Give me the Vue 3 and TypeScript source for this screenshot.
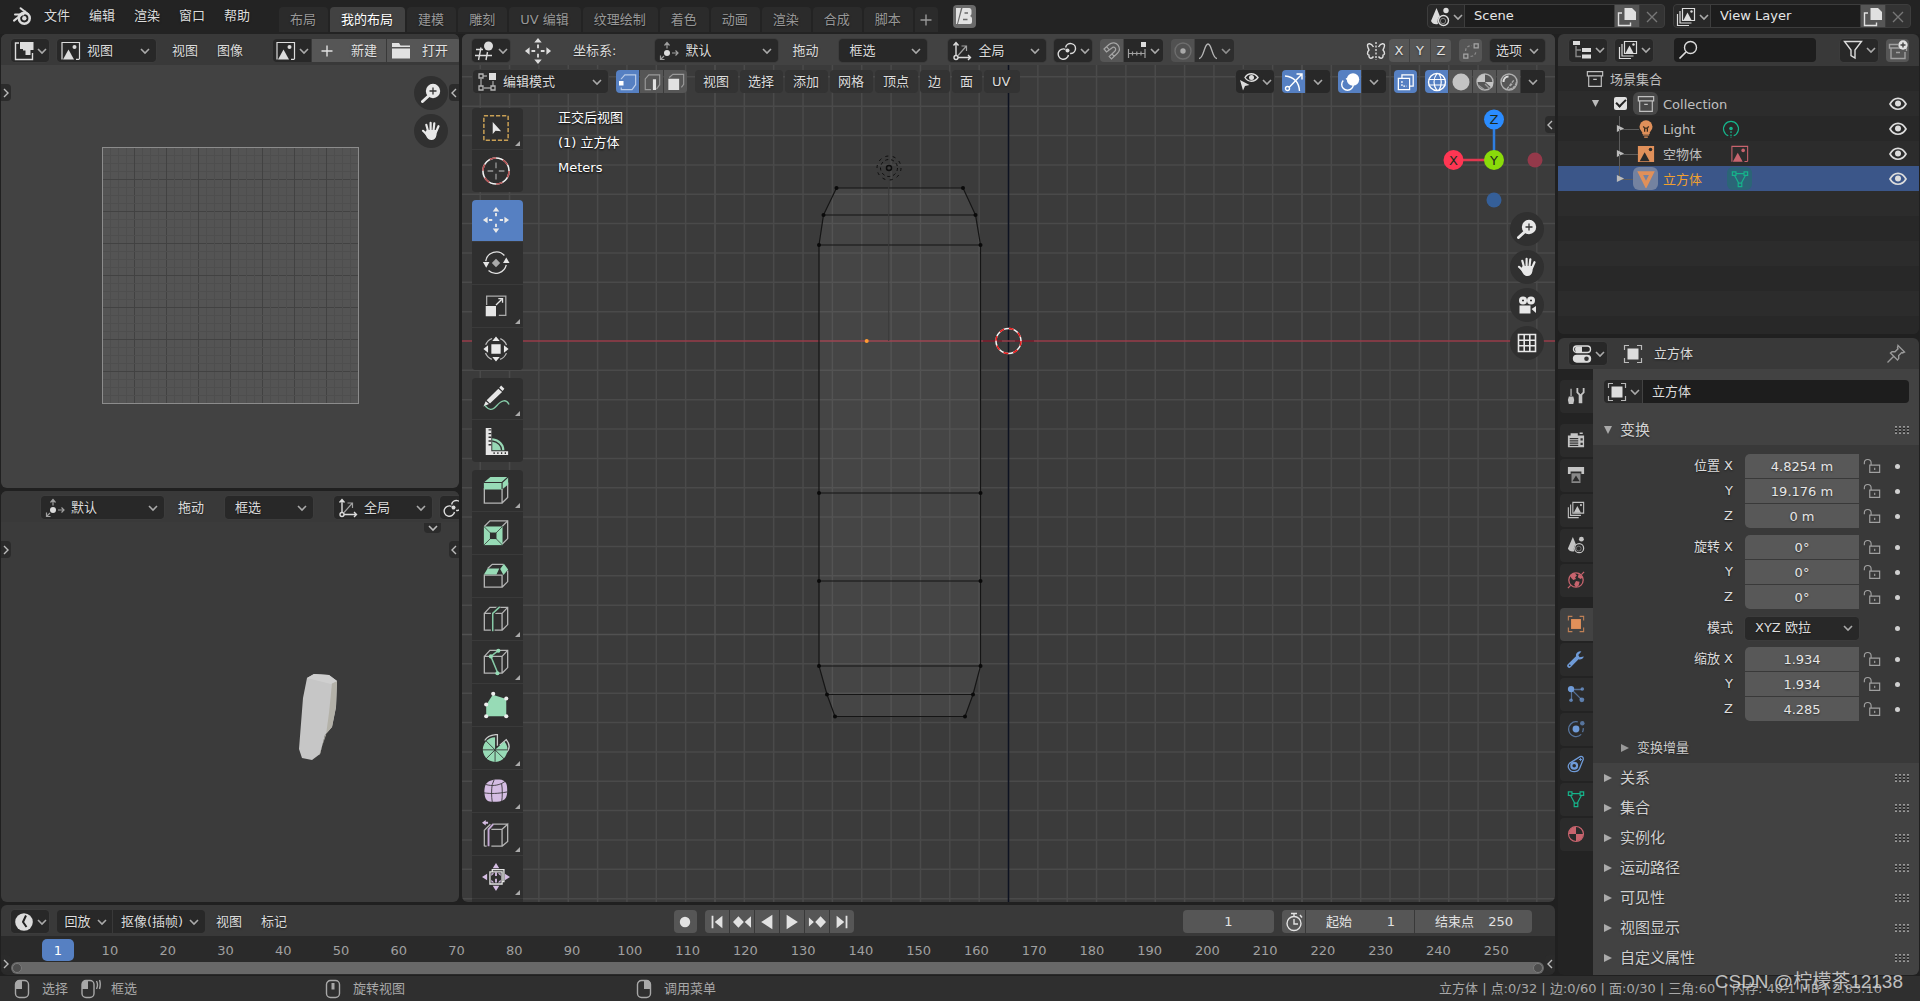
<script setup lang="ts">
import { h, ref } from 'vue'
import type { FunctionalComponent } from 'vue'

const Icon: FunctionalComponent<{ n: string; s?: number }> = (props) =>
  h('svg', { class: 'ic', width: props.s ?? 20, height: props.s ?? 20, 'aria-hidden': 'true' }, [
    h('use', { href: '#' + props.n, width: '100%', height: '100%' }),
  ])
Icon.props = ['n', 's']

const menus = ['文件', '编辑', '渲染', '窗口', '帮助']
const tabs = ['布局', '我的布局', '建模', '雕刻', 'UV 编辑', '纹理绘制', '着色', '动画', '渲染', '合成', '脚本']
const viewMenus = ['视图', '选择', '添加', '网格', '顶点', '边', '面', 'UV']

interface Tool { icon: string; label: string; more?: boolean; on?: boolean }
const toolGroups: Tool[][] = [
  [{ icon: 't-select', label: '框选', more: true }, { icon: 't-cursor', label: '游标' }],
  [
    { icon: 't-move', label: '移动', on: true },
    { icon: 't-rotate', label: '旋转' },
    { icon: 't-scale', label: '缩放', more: true },
    { icon: 't-transform', label: '变换' },
  ],
  [{ icon: 't-annotate', label: '标注', more: true }, { icon: 't-measure', label: '测量' }],
  [
    { icon: 't-extrude', label: '挤出选区', more: true },
    { icon: 't-inset', label: '内插面' },
    { icon: 't-bevel', label: '倒角' },
    { icon: 't-loop', label: '环切', more: true },
    { icon: 't-knife', label: '切割', more: true },
    { icon: 't-poly', label: '多边形建形' },
    { icon: 't-spin', label: '旋绕', more: true },
    { icon: 't-smooth', label: '光滑', more: true },
    { icon: 't-slide', label: '滑移边线', more: true },
    { icon: 't-shrink', label: '法向缩放', more: true },
    { icon: 't-shear', label: '切变' },
  ],
]

const shading = [
  { icon: 'wire', label: '线框', on: true },
  { icon: 'solid', label: '实体' },
  { icon: 'matball', label: '材质预览' },
  { icon: 'rendball', label: '渲染' },
]

const transport = [
  { icon: 'first', label: '跳至起点' },
  { icon: 'prevkey', label: '上一关键帧' },
  { icon: 'back', label: '倒放' },
  { icon: 'play', label: '播放' },
  { icon: 'nextkey', label: '下一关键帧' },
  { icon: 'last', label: '跳至终点' },
]
const frames = Array.from({ length: 25 }, (_, i) => (i + 1) * 10)

const propTabs = [
  [{ icon: 'tools', c: 'c-grey', label: '工具' }],
  [
    { icon: 'render', c: 'c-grey', label: '渲染' },
    { icon: 'output', c: 'c-grey', label: '输出' },
    { icon: 'layers', c: 'c-grey', label: '视图层' },
    { icon: 'scene', c: 'c-grey', label: '场景' },
    { icon: 'world', c: 'c-red', label: '世界' },
  ],
  [
    { icon: 'object', c: 'c-orange', label: '物体', on: true },
    { icon: 'wrench', c: 'c-blue', label: '修改器' },
    { icon: 'particles', c: 'c-blue', label: '粒子' },
    { icon: 'physics', c: 'c-blue', label: '物理' },
    { icon: 'constraint', c: 'c-blue', label: '约束' },
    { icon: 'mesh', c: 'c-green', label: '数据' },
    { icon: 'material', c: 'c-red', label: '材质' },
  ],
]
const loc = ref([['位置 X', '4.8254 m'], ['Y', '19.176 m'], ['Z', '0 m']])
const rot = ref([['旋转 X', '0°'], ['Y', '0°'], ['Z', '0°']])
const scl = ref([['缩放 X', '1.934'], ['Y', '1.934'], ['Z', '4.285']])
const panels = ['关系', '集合', '实例化', '运动路径', '可见性', '视图显示', '自定义属性']

// One unit of the floor grid covers 29.35 px; every tenth line is brighter.
const step = 29.35
const originX = 546.5
const originY = 307
const lines = (origin: number, size: number) => {
  const out: { p: number; major: boolean }[] = []
  for (let i = -25; i <= 25; i++) {
    const p = origin + i * step
    if (i !== 0 && p > 0 && p < size) out.push({ p, major: i % 10 === 0 })
  }
  return out
}
const vLines = lines(originX, 1093)
const hLines = lines(originY, 868)
const verts: number[][] = [
  [374.5, 154], [501, 154], [361.5, 181], [513.5, 181], [357, 211], [518.5, 211],
  [357, 459], [518.5, 459], [357, 547], [518.5, 547], [357, 632], [518.5, 632],
  [365, 660.5], [511, 660.5], [373, 682.5], [503, 682.5],
]
const uvLines = Array.from({ length: 31 }, (_, i) => (i + 1) * 8)
</script>

<template>
  <svg width="0" height="0" class="sprite" aria-hidden="true">
    <symbol id="chev" viewBox="0 0 10 10"><path d="M1 3l4 4 4-4" stroke-width="1.6" /></symbol>
    <symbol id="chev-r" viewBox="0 0 10 10"><path d="M3 1l4 4-4 4" /></symbol>
    <symbol id="chev-l" viewBox="0 0 10 10"><path d="M7 1L3 5l4 4" /></symbol>
    <symbol id="tri-r" viewBox="0 0 10 10"><path d="M1 1v8l8-4z" fill="currentColor" stroke="none" /></symbol>
    <symbol id="tri-d" viewBox="0 0 10 10"><path d="M1 1h8l-4 8z" fill="currentColor" stroke="none" /></symbol>
    <symbol id="logo" viewBox="0 0 20 20">
      <circle cx="12.3" cy="12.3" r="5.4" stroke-width="2.6" /><circle cx="12.3" cy="12.2" r="2.2" fill="currentColor" stroke="none" />
      <path d="M2 14.6L13.4 5.6M3 8.4h8.4M8.6 2.2l7.6 6" stroke-width="2" stroke-linecap="round" />
    </symbol>
    <symbol id="uv" viewBox="0 0 20 20"><path d="M5 2H1.500v16.500h17V12" /><path d="M6 1h13.500v8h-3v5h-5V9.500H9V8H6z" fill="currentColor" stroke="none" /></symbol>
    <symbol id="image" viewBox="0 0 20 20"><path d="M1 18V1.500h17.500V18M1 12v6.500M15 18.300h3.500" stroke-width="1.2" /><path d="M2 18.500L7.500 8.500l5.500 10z" fill="currentColor" stroke="none" /><circle cx="13.500" cy="6" r="2" fill="currentColor" stroke="none" /></symbol>
    <symbol id="folder" viewBox="0 0 20 20"><path d="M1 2h7l1.500 2.500H19V6H1zM1 7.500h18v10H1z" fill="currentColor" stroke="none" /></symbol>
    <symbol id="plus" viewBox="0 0 20 20"><path d="M10 4.500v11M4.500 10h11" /></symbol>
    <symbol id="zoom" viewBox="0 0 20 20"><circle cx="12" cy="8" r="7.200" fill="currentColor" stroke="none" /><path d="M7.500 13l-6 5.500" stroke-width="3" stroke-linecap="round" /><path d="M12 4.500v7M8.500 8h7" stroke="#333" stroke-width="1.300" /></symbol>
    <symbol id="hand" viewBox="0 0 20 20"><path d="M7 10L5.300 3.800M9.600 9V1.800M12.500 9.500l.8-7.200M15 11l2.500-5.800M6.500 14L2 9.800" stroke-width="2.200" stroke-linecap="round" /><path d="M5.800 9h10.300l-.6 5c-.5 3.500-2.500 5-5 5-2.600 0-4-1.200-5.500-4.200L3.500 12z" fill="currentColor" stroke="none" /></symbol>
    <symbol id="cameranav" viewBox="0 0 20 20"><circle cx="6" cy="5.500" r="4" fill="currentColor" stroke="none" /><circle cx="14" cy="5.500" r="4" fill="currentColor" stroke="none" /><path d="M2.500 10.500h11v8h-11zM14.500 14l4.500-3v7z" fill="currentColor" stroke="none" /><path d="M5 5.500h2M13 5.500h2" stroke="#333" /></symbol>
    <symbol id="gridnav" viewBox="0 0 20 20"><path d="M1.500 1.500h17v17h-17zM7.200 1.500v17M12.800 1.500v17M1.500 7.200h17M1.500 12.800h17" stroke-width="1.600" /></symbol>
    <symbol id="view3d" viewBox="0 0 20 20"><circle cx="13.500" cy="5" r="4.500" fill="currentColor" stroke="none" /><path d="M1 8.500h7M0 14.500h17M6 6.500L3.500 19M12.500 11l-1.500 8" /></symbol>
    <symbol id="move" viewBox="0 0 30 30"><path d="M15 1l4 5h-8zM15 29l4-5h-8zM1 15l5-4v8zM29 15l-5-4v8zM14 8h2v4h-2zM14 18h2v4h-2zM8 14h4v2H8zM18 14h4v2h-4z" fill="currentColor" stroke="none" /></symbol>
    <symbol id="orient" viewBox="0 0 20 20"><circle cx="8" cy="12" r="3" fill="currentColor" stroke="none" /><path d="M8 7.500V2M5.500 4.500L8 1.500l2.500 3M13 12h5.500M16.500 9.500l2.500 2.500-2.500 2.500M5 15l-3.500 3.500M1.500 14.500v4h4" stroke="#a0a0a0" stroke-width="1.200" /></symbol>
    <symbol id="axes" viewBox="0 0 20 20"><path d="M4 14V2M1.500 4.500L4 1.500l2.500 3M6 16.500h12.500M16 14l2.500 2.500L16 19" /><circle cx="4" cy="16.500" r="2" /><path d="M6 14.500L14 5.500M9.500 5h5v5" stroke="#a0a0a0" stroke-width="1.200" /></symbol>
    <symbol id="pivot" viewBox="0 0 20 20"><path d="M8.500 8.300A5.200 5.200 0 1 0 11.500 14M8.600 6.500a5 5 0 1 1 4.500 6" /><circle cx="10.500" cy="9.500" r="2" fill="currentColor" stroke="none" /></symbol>
    <symbol id="magnet" viewBox="0 0 20 20"><path d="M2 8l5-4.500c3-2.600 7.200-2 9.200.8 2 3 1.300 6-1 8.200L9.500 18l-2.300-2.500 5.300-5c1.400-1.300 1.500-2.700.6-3.600-1-1-2.400-.8-3.600.3L4.500 11zM4.500 5.700l2.600 3M12.300 15.500l-2.400-2.700" stroke-width="1.200" /></symbol>
    <symbol id="incr" viewBox="0 0 20 20"><path d="M1.500 8v9M18 8v9M1.500 12.500H18M5.500 10.500v4M9.800 10.500v4M14 10.500v4" stroke="#a0a0a0" stroke-width="1.200" /><path d="M14 1h5v5h-5z" fill="currentColor" stroke="none" /></symbol>
    <symbol id="prop" viewBox="0 0 20 20"><circle cx="10" cy="10" r="8" stroke="#7c7c7c" /><circle cx="10" cy="10" r="2.700" fill="#ccc" stroke="none" /></symbol>
    <symbol id="falloff" viewBox="0 0 20 20"><path d="M1 17.500c5 0 5-14.500 9-14.500s4 14.500 9 14.500" /></symbol>
    <symbol id="mirror" viewBox="0 0 20 20"><path d="M10 1v18" stroke-dasharray="2 1.500" /><path d="M7.500 6C5 2 1.500 2 1.500 4.500c0 2 1 3 1.500 4.500-1 1-1.500 2-1.500 3.500 0 1 .8 1.500 1.500 1.700-.5 3 2.500 4.300 4.500 1.300M12.500 6c2.500-4 6-4 6-1.500 0 2-1 3-1.500 4.500 1 1 1.500 2 1.500 3.500 0 1-.8 1.500-1.500 1.700.5 3-2.500 4.300-4.500 1.300" /></symbol>
    <symbol id="automerge" viewBox="0 0 20 20"><path d="M2 13.500h4.500V18H2zM13.500 2H18v4.500h-4.500z" /><path d="M4 10c0-4 3-6 7-6M9.500 16c4 0 6-3 6-6.500" stroke-dasharray="3 2" stroke="#888" /></symbol>
    <symbol id="edit" viewBox="0 0 20 20"><path d="M4 7v7M7 16h7M16 9v5M6 4h4" stroke="#999" /><path d="M2 2h4v4H2zM2 14h4v4H2zM14 14h4v4h-4z" stroke-width="1.300" stroke="#b5b5b5" /><path d="M12 1h7v7h-7z" fill="currentColor" stroke="none" /></symbol>
    <symbol id="vsel" viewBox="0 0 20 20"><path d="M2.500 7V6.500L6.500 2h12v11l-4 5.500h-12V16" stroke="#b9cbe8" stroke-width="1.300" /><path d="M0 9h5v5H0z" fill="currentColor" stroke="none" /></symbol>
    <symbol id="esel" viewBox="0 0 20 20"><path d="M9 18.500H2.500v-12L6.500 2h12v11l-3.500 5" stroke="#999" stroke-width="1.300" /><path d="M11 7h3.500v12H11z" fill="currentColor" stroke="none" /></symbol>
    <symbol id="fsel" viewBox="0 0 20 20"><path d="M2.500 5L6.500 1.500h12v11L16 16" stroke="#999" stroke-width="1.300" /><path d="M1.500 6.500h12V19h-12z" fill="currentColor" stroke="none" /></symbol>
    <symbol id="viscur" viewBox="0 0 20 20"><path d="M6 5.500c3-5 9.500-5 13 0-3.500 5-10 5-13 0z" /><circle cx="12.500" cy="5.500" r="2.500" fill="currentColor" stroke="none" /><path d="M1 8l9.500 5-4.500 1-2 4.500z" fill="currentColor" stroke="none" /></symbol>
    <symbol id="gizmo" viewBox="0 0 20 20"><path d="M1 4c9 1 14 6 14.500 15M5 15.500L17.500 2.500M12.500 2H18v5.500" /><circle cx="3.500" cy="16.500" r="2" /></symbol>
    <symbol id="overlay" viewBox="0 0 20 20"><circle cx="13" cy="7.500" r="6.200" fill="currentColor" stroke="none" /><circle cx="7.500" cy="12.500" r="5.800" stroke-dasharray="22 3" /></symbol>
    <symbol id="xray" viewBox="0 0 20 20"><path d="M1.500 6h12.500v12.500H1.500zM5.500 6V2h12.500v12.500h-4" /><path d="M5.500 9v5.500H11" stroke-dasharray="2 1.500" /></symbol>
    <symbol id="wire" viewBox="0 0 20 20"><circle cx="10" cy="10" r="8.500" /><path d="M1.500 7.500h17M1.500 13h17M10 1.500c-4 5-4 12 0 17M12 1.500c3 5 3 12 0 17" stroke-width="1.200" /></symbol>
    <symbol id="solid" viewBox="0 0 20 20"><circle cx="10" cy="10" r="8.500" fill="#c4c4c4" stroke="none" /></symbol>
    <symbol id="matball" viewBox="0 0 20 20"><circle cx="10" cy="10" r="8" stroke="#b0b0b0" /><path d="M10 2a8 8 0 0 0-8 8h8zM10 10l7 6a9 9 0 0 0 1-6z" fill="#c4c4c4" stroke="none" /><path d="M3 13l7 5M10 12l5 5" stroke="#999" /></symbol>
    <symbol id="rendball" viewBox="0 0 20 20"><circle cx="10" cy="10" r="8" stroke="#b0b0b0" /><path d="M4.500 10c0-3 2-5.500 5-5.500" stroke="#ddd" stroke-width="2" /><path d="M10 17.500c4-1 6.500-3.500 7.500-7.500M11 14l3-3M8 17l7-9" stroke="#aaa" stroke-dasharray="3 1" /></symbol>
    <symbol id="scene" viewBox="0 0 20 20"><path d="M6.500 1L10 9.500c-2 1-3 4-2 7.500-3 1-6-.5-7-3z" fill="currentColor" stroke="none" /><circle cx="16" cy="3.500" r="2.700" fill="currentColor" stroke="none" /><circle cx="13.500" cy="13.500" r="5" /><circle cx="13" cy="14" r="2.700" stroke-width="1" opacity=".5" /></symbol>
    <symbol id="dup" viewBox="0 0 20 20"><path d="M7.500 1H15l4 4v8H7.500z" fill="currentColor" stroke="none" /><path d="M5 6H1.500v12.500h12V15.500" /></symbol>
    <symbol id="close" viewBox="0 0 20 20"><path d="M5 5l10 10M15 5L5 15" /></symbol>
    <symbol id="layers" viewBox="0 0 20 20"><path d="M6.500 1.500h12v12h-12zM4 4v12h11.500M1.500 7v11.500H13" stroke-width="1.200" /><path d="M7.500 13l4-7.500 4 7.500z" fill="currentColor" stroke="none" /><circle cx="15.500" cy="4.500" r="1.200" fill="currentColor" stroke="none" /></symbol>
    <symbol id="tree" viewBox="0 0 20 20"><path d="M1 1h7v4H1zM10 8h9v4h-9zM10 14.500h9v4h-9z" fill="currentColor" stroke="none" /><path d="M4 6v10.500h5M4 10h5" stroke="#888" /></symbol>
    <symbol id="search" viewBox="0 0 20 20"><circle cx="12.500" cy="7.500" r="6" /><path d="M8 12l-6.500 6.500" stroke-width="1.700" /></symbol>
    <symbol id="filter" viewBox="0 0 20 20"><path d="M1.500 1.500h17L12 10v8l-4-2.500V10z" /></symbol>
    <symbol id="newcol" viewBox="0 0 20 20"><path d="M10 4.500H1.500v3.500h17V11M3 8v10.500h14V12M8 12.500h4" stroke="#a0a0a0" /><circle cx="15" cy="5" r="4.700" fill="currentColor" stroke="none" /><path d="M15 2.500v5M12.500 5h5" stroke="#444" /></symbol>
    <symbol id="box" viewBox="0 0 20 20"><path d="M1.500 1.800h17V6.500h-17zM3 6.500v11.700h14V6.500M8 10.500h4" stroke-width="1.300" /></symbol>
    <symbol id="bulb" viewBox="0 0 20 20"><circle cx="10" cy="7.500" r="7.200" fill="currentColor" stroke="none" /><path d="M6.500 13h7v2h-7zM6.500 16.500h7M8 19h4" fill="currentColor" stroke-width="1.300" /><path d="M7 7l1.500 2h3L13 7M8.500 9v4M11.500 9v4" stroke="#3a2a1a" /></symbol>
    <symbol id="lightdata" viewBox="0 0 20 20"><path d="M7 17.500a8.300 8.300 0 1 1 6 0" /><circle cx="10" cy="9.500" r="2" fill="currentColor" stroke="none" /><path d="M10 12.500v8" stroke-dasharray="2 1.500" /></symbol>
    <symbol id="imgfull" viewBox="0 0 20 20"><path d="M1 1h18v18H1z" fill="currentColor" stroke="none" /><path d="M3 18L8.500 8l5.500 10z" fill="#2b2b2b" stroke="none" /><circle cx="15" cy="5" r="2" fill="#2b2b2b" stroke="none" /></symbol>
    <symbol id="meshfill" viewBox="0 0 20 20"><path d="M3.500 3.500h13L10 16.500z" stroke-width="4" /></symbol>
    <symbol id="mesh" viewBox="0 0 20 20"><path d="M1.500 2h4v4h-4zM14.500 2h4v4h-4zM8 14.500h4v4H8zM5.500 4h9M4 6l4.500 8.500M16 6l-4.500 8.500" stroke-width="1.300" /></symbol>
    <symbol id="eye" viewBox="0 0 20 20"><path d="M2 10c4-7.500 12-7.500 16 0-4 7-12 7-16 0z" stroke-width="1.700" /><circle cx="10" cy="9.500" r="3" fill="currentColor" stroke="none" /></symbol>
    <symbol id="toggles" viewBox="0 0 20 20"><rect x="1.500" y="2" width="17" height="6.500" rx="3.200" /><rect x="1.500" y="11.500" width="17" height="6.500" rx="3.200" fill="currentColor" /><path d="M4 2.500h6v5.500H4q-2-3 0-5.500" fill="currentColor" stroke="none" /><circle cx="14.500" cy="14.700" r="2.300" fill="#333" stroke="none" /></symbol>
    <symbol id="object" viewBox="0 0 20 20"><path d="M4.500 4.500h11v11h-11z" fill="currentColor" stroke="none" /><path d="M1.500 6V1.500H6M14 1.500h4.500V6M18.500 14v4.500H14M6 18.500H1.500V14" stroke-width="1.200" opacity=".8" /></symbol>
    <symbol id="pin" viewBox="0 0 20 20"><path d="M12 1.500l6.500 6.500-2 1-.8-.4-3 3v3l-1.200 1.400-7-7L6 7.800h3l3-3-.5-1zM7.500 12.500l-6 6" /></symbol>
    <symbol id="tools" viewBox="0 0 20 20"><path d="M4.500 2v8" stroke-width="1.300" /><path d="M2 10.500h5l1 4-1 4.500H2l-1-4.500z" fill="currentColor" stroke="none" /><path d="M15 9v9" stroke-width="4" /><path d="M11.500 1v5l3.500 3.500L18.500 6V1" stroke-width="2" /></symbol>
    <symbol id="render" viewBox="0 0 20 20"><path d="M1 5h3V2.500h8V5h7v13H1z" fill="currentColor" stroke="none" /><path d="M3 8.500h9.500M3 11h9.500M3 13.500h9.500M3 16h9.500" stroke="#333" stroke-width="1.500" /><path d="M15 8h2.500v2.500H15zM15 13h2.500v2.500H15z" fill="#333" stroke="none" /><path d="M14 2.500h3.500" /></symbol>
    <symbol id="output" viewBox="0 0 20 20"><path d="M1 1h18v8h-3V6H4v3H1z" fill="currentColor" stroke="none" /><path d="M5 8h10v11H5z" fill="#888" stroke="none" /><path d="M6 17l4-6.500 4 6.500z" fill="#2b2b2b" stroke="none" /></symbol>
    <symbol id="world" viewBox="0 0 20 20"><circle cx="10" cy="10" r="8" /><path d="M3 5l5-3 3 3-2 2 1 2-3 1-2-2zM10 11l4 1-1 4-3 2-2-3zM13 3l5 4-3 2-3-2z" fill="currentColor" stroke="none" /><path d="M1 19l3-3M16 4l3-3" /></symbol>
    <symbol id="wrench" viewBox="0 0 20 20"><path d="M2.500 17.500L11 9" stroke-width="4.500" stroke-linecap="round" /><path d="M16 1.800a4.500 4.500 0 1 0 2.700 5.500L14 8l-1.500-2.500z" fill="currentColor" stroke="none" /><circle cx="3" cy="17" r="1" fill="#333" stroke="none" /></symbol>
    <symbol id="particles" viewBox="0 0 20 20"><path d="M5 5v12M5 5h12M5 5l11 11" opacity=".6" /><circle cx="4.500" cy="4.500" r="3.500" fill="currentColor" stroke="none" /><g fill="currentColor" stroke="none" opacity=".75"><circle cx="17" cy="4.500" r="2" /><circle cx="4.500" cy="17" r="2" /><circle cx="16.500" cy="16.500" r="2.700" /></g></symbol>
    <symbol id="physics" viewBox="0 0 20 20"><path d="M12 2.200A8.200 8.200 0 1 0 15.800 16M18 9a8 8 0 0 1-.8 4.500" opacity=".65" /><circle cx="10" cy="10" r="3.800" fill="currentColor" stroke="none" /><circle cx="17" cy="3.500" r="2.500" fill="currentColor" stroke="none" opacity=".65" /></symbol>
    <symbol id="constraint" viewBox="0 0 20 20"><path d="M3 9L14.500 1.800c2.500-.8 4 1 3.500 3.200L14 15c-2 4.500-9.500 5-12 0-1-2-.5-4.500 1-6z" /><circle cx="8" cy="12" r="3.200" stroke-width="2.400" /><path d="M15 3.200v3.500M13.300 5h3.400" stroke-width="1" /></symbol>
    <symbol id="material" viewBox="0 0 20 20"><circle cx="10" cy="10" r="8.300" stroke-width="1.300" /><path d="M10 2a8 8 0 0 0-8 8h8zM10 10v8a8 8 0 0 0 8-8z" fill="currentColor" stroke="none" /></symbol>
    <symbol id="clock" viewBox="0 0 20 20"><circle cx="10" cy="10" r="8.800" fill="currentColor" stroke="none" /><path d="M12 3.500L9 10l3.500 5" stroke="#222" stroke-width="2" /></symbol>
    <symbol id="stopwatch" viewBox="0 0 20 20"><circle cx="10" cy="11.500" r="7" /><path d="M7 1.500h6M10 2v3M10 7v5h4M16 3l2 2.500" /></symbol>
    <symbol id="rec" viewBox="0 0 20 20"><circle cx="10" cy="10" r="5.200" fill="currentColor" stroke="none" /></symbol>
    <symbol id="first" viewBox="0 0 20 20"><path d="M4 3h2v14H4zM16 3v14L7.500 10z" fill="currentColor" stroke="none" /></symbol>
    <symbol id="last" viewBox="0 0 20 20"><path d="M16 3h-2v14h2zM4 3v14l8.500-7z" fill="currentColor" stroke="none" /></symbol>
    <symbol id="prevkey" viewBox="0 0 20 20"><path d="M6 3.500l6 6.500-6 6.500L0 10zM20 3.500v13L13 10z" fill="currentColor" stroke="none" /></symbol>
    <symbol id="nextkey" viewBox="0 0 20 20"><path d="M14 3.500l6 6.500-6 6.500L8 10zM1 5v10l5.500-5z" fill="currentColor" stroke="none" /></symbol>
    <symbol id="back" viewBox="0 0 20 20"><path d="M16 2v16L3.500 10z" fill="currentColor" stroke="none" /></symbol>
    <symbol id="play" viewBox="0 0 20 20"><path d="M4 2v16L16.500 10z" fill="currentColor" stroke="none" /></symbol>
    <symbol id="mouse-l" viewBox="0 0 20 20"><rect x="3.500" y="1.500" width="13" height="17" rx="4" /><path d="M3.500 10V5q0-3.500 3.500-3.500h3V10z" fill="currentColor" stroke="none" /></symbol>
    <symbol id="mouse-drag" viewBox="0 0 20 20"><rect x="1" y="1.500" width="12" height="17" rx="4" /><path d="M1 10V5q0-3.500 3.500-3.500h2.500V10z" fill="currentColor" stroke="none" /><path d="M15.500 2q2 4 0 8M18.500 1q1.500 4 0 9" /></symbol>
    <symbol id="mouse-m" viewBox="0 0 20 20"><rect x="3.500" y="1.500" width="13" height="17" rx="4" /><path d="M8.500 4h3v6.500h-3z" fill="currentColor" stroke="none" /></symbol>
    <symbol id="mouse-r" viewBox="0 0 20 20"><rect x="3.500" y="1.500" width="13" height="17" rx="4" /><path d="M16.500 10V5q0-3.500-3.500-3.500h-3V10z" fill="currentColor" stroke="none" /></symbol>
    <symbol id="unlock" viewBox="0 0 20 20"><path d="M1.500 8V6.500c0-5 7.500-5 7.500 0V9M7.500 9h11v8h-11zM13 12v2.500" stroke-width="1.300" /></symbol>
    <symbol id="grip" viewBox="0 0 15 8"><path d="M0 1h15M0 4h15M0 7h15" stroke="#b5b5b5" stroke-width="1.500" stroke-dasharray="2 2" /><path d="M0 2.500h15M0 5.500h15" stroke="#1c1c1c" stroke-width="1.500" stroke-dasharray="2 2" /></symbol>

    <symbol id="t-select" viewBox="0 0 30 30"><path d="M2 2h26v26H2z" stroke="#c9a055" stroke-width="1.600" stroke-dasharray="4.500 2" /><path d="M11.500 8.500v13l3-3.500 6 .5z" fill="#e6e6e6" stroke="none" /></symbol>
    <symbol id="t-cursor" viewBox="0 0 30 30"><circle cx="15" cy="15" r="14" stroke="#f0f0f0" stroke-width="1.700" /><circle cx="15" cy="15" r="14" stroke="#b44d4f" stroke-width="1.700" stroke-dasharray="7 7.660" /><path d="M15 6v6M15 18v6M6 15h6M18 15h6" stroke="#999" /></symbol>
    <symbol id="t-move" viewBox="0 0 30 30"><path d="M15 1l3.500 5h-7zM15 29l3.500-5h-7zM1 15l5-3.500v7zM29 15l-5-3.500v7zM14 7.500h2V11h-2zM14 19h2v3.500h-2zM7.500 14H11v2H7.500zM19 14h3.500v2H19z" fill="#e9e9e9" stroke="none" /></symbol>
    <symbol id="t-rotate" viewBox="0 0 30 30"><path d="M4 13A11.500 11.500 0 0 1 24 7M26 17A11.500 11.500 0 0 1 7 23" stroke="#e0e0e0" /><path d="M1 14h7l-3.500 6zM29.500 15h-7l3.500-6z" fill="#e6e6e6" stroke="none" /><path d="M15 10.500l4.500 4.500-4.500 4.500-4.500-4.500z" fill="#aaa" stroke="none" /></symbol>
    <symbol id="t-scale" viewBox="0 0 30 30"><path d="M5 14V4.500h20.500V25H18" stroke="#aaa" /><path d="M4 15h11v11H4z" fill="#e6e6e6" stroke="none" /><path d="M15 14l6-6M17.500 7H22v4.500" stroke="#e6e6e6" /></symbol>
    <symbol id="t-transform" viewBox="0 0 30 30"><circle cx="15" cy="15" r="12" stroke="#bbb" stroke-dasharray="9.800 9" stroke-dashoffset="-4.500" /><path d="M10 10h10v10H10zM15 1.500l4 5h-8zM15 28.500l4-5h-8zM1.500 15l5-4v8zM28.500 15l-5-4v8z" fill="#e9e9e9" stroke="none" /></symbol>
    <symbol id="t-annotate" viewBox="0 0 30 30"><path d="M5 17.500L17.500 5l4 3.500L8.500 21zM18.500 4l2-2.500 3.500 3.500-2 2.500zM4 18.500l3.500 3L1.500 24z" fill="#e6e6e6" stroke="none" /><path d="M3 23c4 5 8 6 13 0s10-7 13-1" stroke="#86cba7" /></symbol>
    <symbol id="t-measure" viewBox="0 0 30 30"><path d="M4 1h6v25h18v4H4z" fill="#e6e6e6" stroke="none" /><path d="M11 12c8 1 13 6 13 13H11z" fill="#97d8b5" stroke="none" /><path d="M7 3h3M7 7h3M7 11h3M7 15h3M7 19h3M13 27v2M17 27v2M21 27v2M25 27v2" stroke="#333" /><path d="M11 15c6 1 10 5 10 10" stroke="#333" /></symbol>
    <symbol id="t-extrude" viewBox="0 0 30 30"><path d="M2.500 13v16h19V13M21.500 29l6-6V7" stroke="#b5b5b5" /><path d="M2 7l7-6h19v8l-6.500 5.500H2z" fill="#97dbb6" stroke="none" /><path d="M2 7h19.500v7M21.500 7L28 1" stroke="#2f2f2f" stroke-width="1.200" /></symbol>
    <symbol id="t-inset" viewBox="0 0 30 30"><path d="M2.500 8l6-6h19v19l-6 6" stroke="#b5b5b5" /><path d="M21.500 8l6-6" stroke="#b5b5b5" /><path d="M2 8h20v20H2z" fill="#97dbb6" stroke="none" /><path d="M2 8l20 20M22 8L2 28" stroke="#2f2f2f" stroke-width=".8" /><path d="M8.500 14.500h7v7h-7z" fill="#2f2f2f" stroke="none" /></symbol>
    <symbol id="t-bevel" viewBox="0 0 30 30"><path d="M2.500 14v13h19V14zM21.500 27l6-6V9M6 7l5-4.500h12" stroke="#b5b5b5" /><path d="M6 7h12.500l-3 6.500H2zM19.500 7.500l4-5.500 4.500 6-5 6z" fill="#97dbb6" stroke="none" /></symbol>
    <symbol id="t-loop" viewBox="0 0 30 30"><path d="M2.500 9v18h19V9zM2.500 9l6-6.500h19V21l-6 6M21.500 9l6-6.500" stroke="#b5b5b5" /><path d="M11.500 28V9L19 2" stroke="#2f2f2f" stroke-width="4" /><path d="M11.500 28V9L19 2" stroke="#86cba7" stroke-width="1.600" /></symbol>
    <symbol id="t-knife" viewBox="0 0 30 30"><path d="M2.500 9v18h19V9zM2.500 9l6-6.500h19V21l-6 6M21.500 9l6-6.500" stroke="#b5b5b5" /><path d="M17 3L9.500 9 17 27" stroke="#86cba7" stroke-width="1.600" /><g fill="#97dbb6" stroke="none"><circle cx="17.500" cy="3" r="2.200" /><circle cx="9.500" cy="9" r="2.200" /><circle cx="16.500" cy="27" r="2.200" /></g></symbol>
    <symbol id="t-poly" viewBox="0 0 30 30"><path d="M4.500 15l7-11 14.500 4.500V27h-21.500z" fill="#97dbb6" stroke="none" /><g fill="#efefef" stroke="none"><circle cx="12" cy="3" r="2.200" /><circle cx="26" cy="8" r="2.200" /><circle cx="4.500" cy="14.500" r="2.200" /><circle cx="4.500" cy="27" r="2.200" /><circle cx="26" cy="27" r="2.200" /></g></symbol>
    <symbol id="t-spin" viewBox="0 0 30 30"><path d="M3 7c2-4 7-6 13.500-6.500v12M19 12l7-6c4 5 4 10 0 14" stroke="#ccc" /><path d="M14 3.500A13.200 13.200 0 1 0 24 8L14 17z" fill="#97dbb6" stroke="none" /><path d="M14 17V30M0 17h28M4 7l20 20M14 17L4 27" stroke="#2f2f2f" stroke-width=".9" /></symbol>
    <symbol id="t-smooth" viewBox="0 0 30 30"><path d="M4 8c3-5 10-6 17-5 5 2 6 5 6 10s0 8-3 11c-5 3-12 3-17 2-4-2-4-6-4.500-10 0-3 .5-6 1.500-8z" fill="#d5bde3" stroke="none" /><path d="M4 8c7 2 12 1 17-1l5-3M21 7c1 6 1 14 0 20M13 3l-2 5c-1 6-1 12 0 19M2 17c8 1 14 1 25-1" stroke="#2f2f2f" stroke-width=".9" /></symbol>
    <symbol id="t-slide" viewBox="0 0 30 30"><path d="M10 28h11.500V10H10M21.500 28l6-5V4.500l-6 5.500M27.500 4.500h-16M2.500 28V11L9 4.500M2.500 28H5" stroke="#b5b5b5" /><path d="M7 28V10l5-5.500" stroke="#c5aad6" stroke-width="2" /><path d="M0 3l4-3v2h2.500v2H4v2z" fill="#d5bde3" stroke="none" /></symbol>
    <symbol id="t-shrink" viewBox="0 0 30 30"><path d="M8.500 9.500h13v13h-13zM11 9V7h12.500v13H22" stroke="#e6e6e6" /><path d="M15 0l3.500 5.500h-7zM15 30l3.500-5.500h-7zM0 15l5.500-3.500v7zM30 15l-5.500-3.500v7zM10 11h3l-3 3zM20 11h-3l3 3zM10 21h3l-3-3zM20 21h-3l3-3zM14 10h2v4h-2zM14 17h2v4h-2z" fill="#d5bde3" stroke="none" /></symbol>
    <symbol id="t-shear" viewBox="0 0 30 30"><path d="M15 0l4 4h-8z" fill="#d5bde3" stroke="none" /></symbol>
  </svg>

  <div class="app">
    <header class="topbar">
      <Icon n="logo" class="logo" />
      <nav class="menus"><button v-for="m in menus" :key="m">{{ m }}</button></nav>
      <nav class="tabs">
        <button v-for="(t, i) in tabs" :key="i" :class="{ on: i === 1 }">{{ t }}</button>
        <button class="add" aria-label="添加工作区"><Icon n="plus" /></button>
      </nav>
      <button class="badge" aria-label="BlenderKit">
        <svg class="ic" width="18" height="18" viewBox="0 0 18 18"><path d="M1 1h5L2 17H1z" fill="#e2e2e2" stroke="none" /><path d="M7.500 1h7q2 0 2 2.500v3q0 1.500-1.500 2.500 2 .5 2 2.500V15q0 2-2 2h-12z" fill="#e2e2e2" stroke="none" /><path d="M9.500 6h3.500M8 12.500h4.500" stroke="#6a6a6a" stroke-width="1.500" /></svg>
      </button>
      <span class="grow"></span>
      <div class="idblock">
        <button class="dd"><Icon n="scene" /><Icon n="chev" :s="10" /></button>
        <input class="scene-name" value="Scene" aria-label="场景" />
        <button class="btn"><Icon n="dup" /></button><button class="btn dim"><Icon n="close" /></button>
      </div>
      <div class="idblock">
        <button class="dd"><Icon n="layers" /><Icon n="chev" :s="10" /></button>
        <input class="layer-name" value="View Layer" aria-label="视图层" />
        <button class="btn"><Icon n="dup" /></button><button class="btn dim"><Icon n="close" /></button>
      </div>
    </header>

    <div class="body">
      <main class="main">
        <div class="upper">
          <div class="leftcol">
            <section class="editor image-editor">
              <header class="bar">
                <button class="dd solo"><Icon n="uv" /><Icon n="chev" :s="10" /></button>
                <label class="sel w99 ml8"><Icon n="image" /><select aria-label="模式"><option>视图</option></select><Icon n="chev" :s="10" /></label>
                <button class="menu ml16">视图</button>
                <button class="menu ml19">图像</button>
                <div class="grp open-grp">
                  <button class="dd"><Icon n="image" /><Icon n="chev" :s="10" /></button>
                  <button class="btn new"><Icon n="plus" /><span>新建</span></button>
                  <button class="btn new"><Icon n="folder" /><span>打开</span></button>
                </div>
              </header>
              <div class="image-body">
                <svg class="uvgrid" width="257" height="257" viewBox="0 0 257 257">
                  <rect x="0" y="0" width="257" height="257" fill="#545454" />
                  <g stroke-width="1">
                    <path v-for="p in uvLines" :key="p" :d="`M${p + 0.5} 0v257M0 ${p + 0.5}h257`" :stroke="p % 32 === 0 ? '#424242' : '#4e4e4e'" fill="none" />
                  </g>
                  <rect x=".5" y=".5" width="256" height="256" fill="none" stroke="#8c8c8c" />
                </svg>
                <div class="navs">
                  <button class="nav" aria-label="缩放"><Icon n="zoom" /></button>
                  <button class="nav" aria-label="平移"><Icon n="hand" /></button>
                </div>
              </div>
              <button class="edge left" aria-label="展开"><Icon n="chev-r" :s="10" /></button>
              <button class="edge right" aria-label="展开"><Icon n="chev-l" :s="10" /></button>
            </section>

            <section class="editor preview">
              <header class="bar">
                <label class="sel w123 first"><Icon n="orient" /><select aria-label="坐标系"><option>默认</option></select><Icon n="chev" :s="10" /></label>
                <span class="ml14 lab">拖动</span>
                <label class="sel w88 ml21"><select class="plain" aria-label="拖动"><option>框选</option></select><Icon n="chev" :s="10" /></label>
                <label class="sel w98 ml21"><Icon n="axes" /><select aria-label="变换坐标系"><option>全局</option></select><Icon n="chev" :s="10" /></label>
                <button class="dd solo ml8"><Icon n="pivot" /><Icon n="chev" :s="10" /></button>
              </header>
              <svg class="model" viewBox="0 -3 458 380" preserveAspectRatio="xMidYMid meet">
                <path d="M306 153l7-4 15 1 8 6-1 26-4 20-7 8-5 19-8 6-10-2-3-9 4-51z" fill="#c6c6c6" />
                <path d="M336 156l-5 2-3 30-3 22-7 20 1-1 5-19 7-8 4-20z" fill="#b3b1a8" />
                <path d="M306 153l7-4 15 1 8 6-6 3z" fill="#cfcfcf" />
              </svg>
              <button class="edge left" aria-label="展开"><Icon n="chev-r" :s="10" /></button>
              <button class="edge right" aria-label="展开"><Icon n="chev-l" :s="10" /></button>
              <button class="edge down" aria-label="展开"><Icon n="chev" :s="10" /></button>
            </section>
          </div>

          <section class="editor viewport">
            <svg class="scene3d" viewBox="0 0 1093 868" preserveAspectRatio="xMidYMin slice">
              <g fill="none" stroke-width="1.500">
                <path v-for="l in vLines" :key="'v' + l.p" :d="`M${l.p} 0v868`" :stroke="l.major ? '#515151' : '#4a4a4a'" />
                <path v-for="l in hLines" :key="'h' + l.p" :d="`M0 ${l.p}h1093`" :stroke="l.major ? '#515151' : '#4a4a4a'" />
                <path d="M546.500 0v868" stroke="#0d1220" />
                <path d="M0 307h1093" stroke="#993d4a" />
                <path d="M521 307h19M553 307h19" stroke="#6a1d28" />
              </g>
              <path d="M374.500 154H501L513.500 181 518.500 211V632L511 660.500 503 682.500H373L365 660.500 357 632V211L361.500 181z" fill="#fff" fill-opacity=".05" stroke="#151515" stroke-width="1.200" />
              <path d="M361.500 181H513.500M357 211H518.500M357 459H518.500M357 547H518.500M357 632H518.500M365 660.500H511" stroke="#151515" stroke-width="1.200" fill="none" />
              <circle v-for="(v, i) in verts" :key="i" :cx="v[0]" :cy="v[1]" r="2" fill="#0a0a0a" />
              <path d="M426.700 137v170" stroke="#3a3a3a" fill="none" />
              <g fill="none" stroke="#0d0d0d">
                <circle cx="427" cy="134" r="2.500" stroke-width="1.500" />
                <circle cx="427" cy="134" r="8.500" stroke-dasharray="3 3" />
                <circle cx="427" cy="134" r="12" stroke-dasharray="3 4.500" />
              </g>
              <circle cx="404.700" cy="307" r="2" fill="#ff9c33" />
              <circle cx="546.500" cy="307" r="12.500" fill="none" stroke="#f4f4f4" stroke-width="1.500" />
              <circle cx="546.500" cy="307" r="12.500" fill="none" stroke="#e81818" stroke-width="1.500" stroke-dasharray="4.900 4.920" />
            </svg>

            <header class="bar lit">
              <button class="dd solo"><Icon n="view3d" /><Icon n="chev" :s="10" /></button>
              <Icon n="move" :s="28" class="ml14" />
              <span class="ml21 lab">坐标系:</span>
              <label class="sel w123 ml39"><Icon n="orient" /><select aria-label="坐标系"><option>默认</option></select><Icon n="chev" :s="10" /></label>
              <span class="ml14 lab">拖动</span>
              <label class="sel w88 ml21"><select class="plain" aria-label="拖动"><option>框选</option></select><Icon n="chev" :s="10" /></label>
              <label class="sel w98 ml21"><Icon n="axes" /><select aria-label="变换坐标系"><option>全局</option></select><Icon n="chev" :s="10" /></label>
              <button class="dd solo ml8"><Icon n="pivot" /><Icon n="chev" :s="10" /></button>
              <div class="grp ml8"><button class="btn sq faint"><Icon n="magnet" /></button><button class="dd w39"><Icon n="incr" /><Icon n="chev" :s="10" /></button></div>
              <div class="grp ml8 inactive"><button class="btn sq"><Icon n="prop" /></button><button class="dd w39"><Icon n="falloff" /><Icon n="chev" :s="10" /></button></div>
              <span class="grow"></span>
              <Icon n="mirror" />
              <div class="grp ml3"><button class="btn xyz">X</button><button class="btn xyz">Y</button><button class="btn xyz">Z</button></div>
              <div class="grp ml8"><button class="btn sq faint"><Icon n="automerge" :s="18" /></button></div>
              <button class="dd solo opt ml8">选项<Icon n="chev" :s="10" /></button>
            </header>

            <div class="bar2">
              <label class="sel w135"><Icon n="edit" /><select aria-label="交互模式"><option>编辑模式</option></select><Icon n="chev" :s="10" /></label>
              <div class="grp ml8"><button class="btn sq on"><Icon n="vsel" :s="18" /></button><button class="btn sq"><Icon n="esel" :s="18" /></button><button class="btn sq"><Icon n="fsel" :s="18" /></button></div>
              <nav class="vmenus"><button v-for="m in viewMenus" :key="m">{{ m }}</button></nav>
              <span class="grow"></span>
              <button class="dd solo"><Icon n="viscur" /><Icon n="chev" :s="10" /></button>
              <div class="grp ml8"><button class="btn sq on"><Icon n="gizmo" /></button><button class="dd sq"><Icon n="chev" :s="10" /></button></div>
              <div class="grp ml8"><button class="btn sq on"><Icon n="overlay" /></button><button class="dd sq"><Icon n="chev" :s="10" /></button></div>
              <div class="grp ml8"><button class="btn sq on"><Icon n="xray" :s="18" /></button></div>
              <div class="grp ml8">
                <button v-for="s in shading" :key="s.icon" class="btn sq" :class="{ on: s.on }" :aria-label="s.label"><Icon :n="s.icon" /></button>
                <button class="dd sq"><Icon n="chev" :s="10" /></button>
              </div>
            </div>

            <div class="stage">
              <div class="toolbar">
                <div v-for="(g, gi) in toolGroups" :key="gi" class="tgroup">
                  <button v-for="t in g" :key="t.icon" :class="{ on: t.on, more: t.more }" :aria-label="t.label"><Icon :n="t.icon" :s="28" /></button>
                </div>
              </div>
              <div class="info"><p>正交后视图</p><p>(1) 立方体</p><p>Meters</p></div>
              <span class="grow"></span>
              <div class="side">
                <svg class="gizmo" width="104" height="104" viewBox="0 0 104 104">
                  <path d="M53 52V20" stroke="#2f7ee0" stroke-width="2.500" /><path d="M53 52H13" stroke="#e0384f" stroke-width="2.500" />
                  <circle cx="94" cy="52" r="7.500" fill="#94394a" /><circle cx="53" cy="92" r="7.500" fill="#355f98" />
                  <circle cx="53" cy="11.500" r="10" fill="#2b8cff" /><circle cx="53" cy="52" r="10" fill="#8adb0a" /><circle cx="12.500" cy="52" r="10" fill="#ff3653" />
                  <g fill="#1d2a1d" font-size="13" text-anchor="middle"><text x="53" y="16">Z</text><text x="53" y="57">Y</text><text x="12.500" y="57">X</text></g>
                </svg>
                <div class="navs">
                  <button class="nav" aria-label="缩放"><Icon n="zoom" /></button>
                  <button class="nav" aria-label="平移"><Icon n="hand" /></button>
                  <button class="nav" aria-label="相机视角"><Icon n="cameranav" /></button>
                  <button class="nav" aria-label="正交"><Icon n="gridnav" /></button>
                </div>
              </div>
            </div>
            <button class="edge right" aria-label="展开"><Icon n="chev-l" :s="10" /></button>
          </section>
        </div>

        <section class="editor timeline">
          <header class="bar">
            <button class="dd solo"><Icon n="clock" /><Icon n="chev" :s="10" /></button>
            <div class="grp ml8 play-grp"><button class="dd txt">回放<Icon n="chev" :s="10" /></button><button class="dd txt">抠像(插帧)<Icon n="chev" :s="10" /></button></div>
            <button class="menu ml11">视图</button>
            <button class="menu ml19">标记</button>
            <span class="grow before"></span>
            <div class="grp"><button class="btn sq" aria-label="自动插帧"><Icon n="rec" /></button></div>
            <div class="grp ml8"><button v-for="t in transport" :key="t.icon" class="btn tp" :aria-label="t.label"><Icon :n="t.icon" :s="18" /></button></div>
            <span class="grow after"></span>
            <input class="num cur" value="1" aria-label="当前帧" />
            <div class="grp ml8 range">
              <button class="btn sq" aria-label="预览范围"><Icon n="stopwatch" /></button>
              <label class="nf start">起始<input value="1" /></label>
              <label class="nf end">结束点<input value="250" /></label>
            </div>
          </header>
          <div class="ruler"><span class="now">1</span><span v-for="f in frames" :key="f" class="fr">{{ f }}</span></div>
          <div class="scroll"><i></i><i></i></div>
          <button class="edge left" aria-label="展开"><Icon n="chev-r" :s="10" /></button>
          <button class="edge right" aria-label="展开"><Icon n="chev-l" :s="10" /></button>
        </section>
      </main>

      <aside class="rightcol">
        <section class="editor outliner">
          <header class="bar">
            <button class="dd solo"><Icon n="tree" /><Icon n="chev" :s="10" /></button>
            <button class="dd solo ml8"><Icon n="layers" /><Icon n="chev" :s="10" /></button>
            <label class="search"><Icon n="search" /><input aria-label="搜索" /></label>
            <button class="dd solo"><Icon n="filter" /><Icon n="chev" :s="10" /></button>
            <button class="btn sq newcol ml8" aria-label="新建集合"><Icon n="newcol" /></button>
          </header>
          <ul class="rows">
            <li class="root"><Icon n="box" /><span>场景集合</span></li>
            <li class="coll"><Icon n="tri-d" :s="9" class="tri" /><input type="checkbox" checked aria-label="Collection" /><i class="chip"><Icon n="box" /></i><span>Collection</span><Icon n="eye" class="eye" /></li>
            <li class="leaf"><Icon n="tri-r" :s="9" class="tri" /><i class="chip bare c-orange"><Icon n="bulb" /></i><span>Light</span><i class="data c-green"><Icon n="lightdata" /></i><Icon n="eye" class="eye" /></li>
            <li class="leaf"><Icon n="tri-r" :s="9" class="tri" /><i class="chip bare c-orange"><Icon n="imgfull" /></i><span>空物体</span><i class="data c-red push"><Icon n="image" /></i><Icon n="eye" class="eye" /></li>
            <li class="leaf sel-row"><Icon n="tri-r" :s="9" class="tri" /><i class="chip c-orange"><Icon n="meshfill" /></i><span>立方体</span><i class="data c-green push lit-data"><Icon n="mesh" /></i><Icon n="eye" class="eye" /></li>
          </ul>
        </section>

        <section class="editor props">
          <header class="bar">
            <button class="dd solo"><Icon n="toggles" /><Icon n="chev" :s="10" /></button>
            <Icon n="object" class="ml16" /><span class="lab ml11">立方体</span><span class="grow"></span>
            <Icon n="pin" class="pin" />
          </header>
          <div class="pbody">
            <nav class="ptabs">
              <div v-for="(g, gi) in propTabs" :key="gi">
                <button v-for="t in g" :key="t.icon" :class="[t.c, { on: 'on' in t }]" :aria-label="t.label"><Icon :n="t.icon" /></button>
              </div>
            </nav>
            <div class="pcontent">
              <div class="idrow grp"><button class="dd"><Icon n="object" /><Icon n="chev" :s="10" /></button><input value="立方体" aria-label="名称" /></div>
              <button class="phead"><Icon n="tri-d" :s="10" />变换<Icon n="grip" :s="15" class="grip" /></button>
              <div class="fields">
                <div v-for="(g, gi) in [loc, rot]" :key="gi" class="fgroup">
                  <label v-for="(f, i) in g" :key="i"><span>{{ f[0] }}</span><input v-model="f[1]" /><Icon n="unlock" :s="18" /><i class="dot"></i></label>
                </div>
                <div class="fgroup mode">
                  <label><span>模式</span><b class="sel"><select class="plain"><option>XYZ 欧拉</option></select><Icon n="chev" :s="10" /></b><i class="dot"></i></label>
                </div>
                <div class="fgroup">
                  <label v-for="(f, i) in scl" :key="i"><span>{{ f[0] }}</span><input v-model="f[1]" /><Icon n="unlock" :s="18" /><i class="dot"></i></label>
                </div>
                <button class="delta"><Icon n="tri-r" :s="10" />变换增量</button>
              </div>
              <button v-for="p in panels" :key="p" class="phead"><Icon n="tri-r" :s="10" />{{ p }}<Icon n="grip" :s="15" class="grip" /></button>
            </div>
          </div>
        </section>
      </aside>
    </div>

    <footer class="status">
      <span class="hint h1"><Icon n="mouse-l" />选择</span>
      <span class="hint h2"><Icon n="mouse-drag" />框选</span>
      <span class="hint h3"><Icon n="mouse-m" />旋转视图</span>
      <span class="hint h4"><Icon n="mouse-r" />调用菜单</span>
      <span class="stats">立方体 | 点:0/32 | 边:0/60 | 面:0/30 | 三角:60 &nbsp;| 内存: 40.1 MB | 2.83.10</span>
      <span class="mark">CSDN @柠檬茶12138</span>
    </footer>
  </div>
</template>

<style>
html, body { margin: 0; background: #202020; }
</style>

<style scoped>
.sprite { position: absolute; }
* { box-sizing: border-box; }
.app { height: 100vh; min-height: 700px; display: flex; flex-direction: column; overflow: hidden; background: #202020; color: #dcdcdc; font: 13px/20px "DejaVu Sans", "Noto Sans CJK SC", sans-serif; }
button, input, select { font: inherit; color: inherit; border: 0; margin: 0; padding: 0; background: none; border-radius: 0; outline: 0; min-width: 0; }
button { text-shadow: 0 1px 2px rgba(0, 0, 0, .5); white-space: nowrap; }
p, ul { margin: 0; padding: 0; list-style: none; }
i { font-style: normal; }
.ic { flex: none; fill: none; stroke: currentColor; stroke-width: 1.4; display: block; }
.grow { flex: 1; }

.topbar { flex: none; height: 34px; padding: 0 9px 0 12px; display: flex; align-items: center; background: #232323; }
.logo { margin-top: -2px; }
.menus { display: flex; gap: 19px; margin: -2px 29px 0 12px; }
.tabs { display: flex; gap: 2px; align-self: flex-start; margin-top: 7px; }
.tabs button { height: 25px; padding: 0 12px 0 11px; border-radius: 4px 4px 0 0; background: #2b2b2b; color: #989898; }
.tabs button.on { background: #424242; color: #fff; }
.tabs .add { width: 23px; padding: 0 1px; }
.badge { width: 23px; height: 23px; margin: 0 0 2px 15px; padding: 2px; border-radius: 4px; background: #6a6a6a; display: grid; place-items: center; }
.idblock { display: flex; gap: 1px; height: 24px; margin-top: -2px; border-radius: 4px; overflow: hidden; background: #3d3d3d; border: 1px solid #3d3d3d; }
.idblock + .idblock { margin-left: 8px; }
.idblock .dd { border: 0; width: 36px; border-radius: 0; }
.idblock input { background: #1d1d1d; padding: 0 9px; color: #e6e6e6; }
.scene-name, .layer-name { width: 149px; }
.idblock .btn { width: 24px; color: #e0e0e0; }
.idblock .btn.dim { background: #333; color: #777; }

.dd, .sel { display: flex; align-items: center; background: #282828; color: #dcdcdc; }
.dd { justify-content: center; gap: 3px; width: 38px; height: 23px; }
.dd .ic + .ic, .sel > .ic:last-child, .dd > .ic:last-child { color: #aaa; }
.dd.solo { border-radius: 4px; box-shadow: 0 0 0 1px #3c3c3c; flex: none; }
.dd.solo.opt { width: 55px; gap: 7px; }
.dd.w39 { width: 39px; }
.sel { flex: none; height: 23px; border-radius: 4px; padding: 0 6px 0 4px; gap: 6px; box-shadow: 0 0 0 1px #3c3c3c; }
.sel select { appearance: none; flex: 1; height: 23px; text-shadow: 0 1px 2px rgba(0, 0, 0, .5); }
.sel select.plain { padding-left: 6px; }
.sel option { background: #222; }
.w99 { width: 99px; }
.w123 { width: 123px; }
.w88 { width: 88px; }
.w98 { width: 98px; }
.w135 { width: 135px; }
.btn { height: 23px; background: #565656; color: #e2e2e2; display: flex; align-items: center; justify-content: center; }
.btn.sq { width: 23px; flex: none; }
.dd.sq { width: 24px; flex: none; }
.btn.on { background: #5680c2; color: #fff; }
.btn.faint { color: #a5a5a5; }
.grp { display: flex; gap: 1px; border-radius: 4px; overflow: hidden; flex: none; }
.inactive { opacity: .75; }
.xyz { width: 20px; }
.ml3 { margin-left: 3px; }
.ml8 { margin-left: 8px; }
.ml11 { margin-left: 11px; }
.ml14 { margin-left: 14px; }
.ml16 { margin-left: 16px; }
.ml19 { margin-left: 19px; }
.ml21 { margin-left: 21px; }
.ml39 { margin-left: 39px; }
.lab { text-shadow: 0 1px 2px rgba(0, 0, 0, .5); white-space: nowrap; }

.body { flex: 1; min-height: 0; display: flex; gap: 3px; padding: 0 1px 1px; }
.main { flex: 1; min-width: 0; display: flex; flex-direction: column; gap: 3px; }
.upper { flex: 1; min-height: 0; display: flex; gap: 3px; }
.leftcol { flex: none; width: 458px; display: flex; flex-direction: column; gap: 3px; }
.editor { position: relative; border-radius: 6px; overflow: hidden; display: flex; flex-direction: column; }
.bar { flex: none; height: 31px; padding: 2px 10px 0; display: flex; align-items: center; background: #393939; position: relative; }
.bar.lit { background: #424242; }
.image-editor { flex: 454; background: #424242; }
.preview { flex: 411; background: #3b3b3b; }
.open-grp { margin: 0 -20px 0 30px; }
.btn.new { width: 74px; justify-content: flex-start; padding-left: 5px; gap: 14px; }
.btn.new + .btn.new { padding-left: 4px; gap: 11px; }
.image-body { flex: 1; display: grid; place-items: center; }
.uvgrid { grid-area: 1 / 1; margin: 0 0 2px; }
.image-body .navs { grid-area: 1 / 1; place-self: start end; margin: 11px 11px 0 0; }
.navs { display: flex; flex-direction: column; gap: 4px; }
.nav { width: 34px; height: 34px; border-radius: 17px; background: #303030; display: grid; place-items: center; color: #e8e8e8; }
.edge { position: absolute; width: 10px; height: 17px; background: #2b2b2b; color: #bbb; display: grid; place-items: center; }
.edge.left { left: 0; top: 50px; border-radius: 0 4px 4px 0; }
.edge.right { right: 0; top: 50px; border-radius: 4px 0 0 4px; }
.viewport .edge.right { top: 82px; }
.edge.down { right: 18px; top: 32px; width: 17px; height: 10px; border-radius: 0 0 4px 4px; }
.preview .first { margin-left: 30px; }
.model { flex: 1; min-height: 0; width: 100%; }

.viewport { flex: 1; min-width: 0; background: #3b3b3b; }
.scene3d { position: absolute; width: 100%; height: 100%; }
.bar2 { position: relative; flex: none; height: 28px; padding: 5px 10px 0 11px; display: flex; }
.bar2 .sel { background: #2c2c2c; }
.vmenus { display: flex; gap: 2px; margin-left: 8px; }
.vmenus button { height: 23px; padding: 0 9px 0 8px; border-radius: 4px; background: #333; }
.stage { position: relative; flex: 1; min-height: 0; display: flex; padding: 15px 10px 0; }
.toolbar { display: flex; flex-direction: column; gap: 8px; overflow: hidden; }
.tgroup { flex: none; display: flex; flex-direction: column; gap: 1px; border-radius: 4px; overflow: hidden; background: #3a3a3a; }
.tgroup button { position: relative; width: 51px; height: 42px; background: #2f2f2f; display: grid; place-items: center; padding: 0 3px 1px 0; }
.tgroup button:first-child { height: 41px; }
.tgroup button.on { background: #5680c2; }
.tgroup button.more::after { content: ""; position: absolute; right: 3px; bottom: 3px; border: solid transparent; border-width: 0 0 5px 5px; border-bottom-color: #aaa; }
.info { margin: -3px 0 0 35px; color: #fff; line-height: 25px; text-shadow: 0 1px 2px #000; }
.side { display: flex; flex-direction: column; align-items: flex-end; }
.gizmo { font-family: "DejaVu Sans", sans-serif; }
.side .navs { margin-right: 1px; }

.timeline { flex: none; height: 70px; background: #2a2a2a; }
.before { flex: 54; }
.after { flex: 46; }
.play-grp .dd.txt { width: 55px; gap: 6px; padding-left: 2px; }
.play-grp .dd.txt + .dd { width: 92px; }
.tp { width: 24px; }
.num, .nf { height: 23px; background: #565656; color: #e2e2e2; }
.cur { width: 91px; text-align: center; border-radius: 4px; }
.range { margin-right: 13px; }
.nf { display: flex; align-items: center; padding: 0 19px 0 20px; width: 108px; }
.nf input { flex: 1; width: 20px; text-align: right; }
.nf.end { width: 117px; }
.ruler { display: flex; height: 26px; padding: 3px 30px 0 41px; color: #a0a0a0; line-height: 24px; text-align: center; }
.now { width: 32px; height: 22px; margin-right: 7px; background: #5680c2; color: #fff; border-radius: 5px; }
.fr { flex: 1 1 0; }
.scroll { height: 12px; margin: 0 11px 0 10px; border-radius: 6px; background: #686868; display: flex; justify-content: space-between; }
.scroll i { width: 10px; height: 10px; margin: 1px; border-radius: 5px; background: #4d4d4d; border: 1px solid #7a7a7a; }

.rightcol { flex: none; width: 361px; display: flex; flex-direction: column; gap: 4px; }
.outliner { flex: none; height: 300px; background: #282828; }
.outliner .bar { padding: 0 10px 0 11px; height: 32px; }
.search { display: flex; align-items: center; flex: 1; min-width: 0; height: 24px; margin: 0 24px 0 21px; padding-left: 4px; border-radius: 4px; background: #1d1d1d; color: #dcdcdc; }
.search input { flex: 1; width: 20px; }
.newcol { border-radius: 4px; }
.rows { flex: 1; background: repeating-linear-gradient(#282828 0 25px, #2c2c2c 25px 50px); }
.rows li { display: flex; align-items: center; height: 25px; color: #c0c0c0; padding-right: 11px; position: relative; }
.rows span { margin-top: 2px; }
.rows .root { padding-left: 28px; gap: 6px; }
.rows .coll { padding-left: 33px; }
.rows .tri { color: #bbb; }
.coll input { appearance: none; width: 13px; height: 13px; margin: 0 6px 0 14px; background: #e0e0e0; border-radius: 2px; display: grid; place-items: center; }
.coll input::after { content: ""; width: 8px; height: 4px; border: solid #222; border-width: 0 0 2px 2px; transform: rotate(-45deg); margin-bottom: 3px; }
.chip { width: 25px; height: 23px; border-radius: 6px; display: grid; place-items: center; background: #484848; margin-right: 5px; }
.chip.bare { background: none; }
.chip .ic, .data .ic, .root .ic { width: 18px; height: 18px; }
.leaf { padding-left: 58px; }
.leaf .tri { margin-right: 8px; }
.leaf::before { content: ""; position: absolute; left: 61px; top: 0; width: 19px; height: 13px; border: solid #5c5c5c; border-width: 0 0 1px 1px; }
.leaf:not(.sel-row)::after { content: ""; position: absolute; left: 61px; top: 13px; height: 12px; border-left: 1px solid #5c5c5c; }
.chip, .tri { position: relative; }
.leaf span { width: 58px; }
.data { width: 25px; height: 23px; border-radius: 6px; display: grid; place-items: center; margin-left: -3px; }
.data.push { margin-left: 6px; }
.data.lit-data { background: #2b6577; }
.rows .eye { margin-left: auto; color: #dcdcdc; }
.rows .sel-row { background: #3b5689; color: #f0a030; }
.sel-row .chip { background: #7482a0; }

.props { flex: 1; min-height: 0; background: #232323; }
.props .bar { padding: 0 13px 0 11px; }
.pin { color: #999; }
.pbody { flex: 1; min-height: 0; display: flex; }
.ptabs { flex: none; width: 35px; padding: 11px 0 0 2px; display: flex; flex-direction: column; gap: 11px; }
.ptabs div { display: flex; flex-direction: column; gap: 2px; }
.ptabs button { width: 33px; height: 33px; border-radius: 4px 0 0 4px; background: #2b2b2b; display: grid; place-items: center; padding: 0 1px 1px 0; }
.ptabs button.on { background: #424242; }
.ptabs .ic { width: 18px; height: 18px; }
.ptabs .c-grey { color: #c4c4c4; }
.c-red { color: #c8646e; }
.c-orange { color: #e0905a; }
.c-blue { color: #6f9bd8; }
.c-green { color: #16b48b; }
.pcontent { flex: 1; background: #424242; display: flex; flex-direction: column; }
.idrow { margin: 11px 10px 12px 11px; }
.idrow input { flex: 1; background: #1d1d1d; padding: 0 9px; }
.phead { flex: none; height: 30px; padding: 0 9px 0 10px; display: flex; align-items: center; gap: 7px; font-size: 15px; color: #d0d0d0; }
.phead .ic { color: #aaa; }
.phead .grip { margin-left: auto; width: 15px; height: 8px; }
.fields { flex: none; height: 318px; background: #393939; padding-top: 9px; }
.fgroup { display: flex; flex-direction: column; gap: 1px; margin-bottom: 7px; }
.fgroup label { display: flex; align-items: center; height: 24px; }
.fgroup span { width: 140px; text-align: right; margin-right: 12px; text-shadow: 0 1px 2px rgba(0, 0, 0, .5); }
.fgroup input { width: 114px; height: 24px; text-align: center; background: #585858; color: #e6e6e6; margin-right: 4px; text-shadow: 0 1px 2px rgba(0, 0, 0, .5); }
.fgroup label:first-child input { border-radius: 5px 0 0 0; }
.fgroup label:last-child input { border-radius: 0 0 0 5px; }
.fgroup .ic { color: #a0a0a0; }
.fgroup .sel { width: 114px; margin-right: 22px; font-weight: normal; }
.dot { width: 5px; height: 5px; border-radius: 3px; background: #d0d0d0; margin-left: 14px; }
.delta { display: flex; align-items: center; gap: 7px; margin: 17px 0 0 27px; color: #ccc; }
.delta .ic { color: #999; }

.status { flex: none; height: 25px; padding: 0 38px 0 12px; display: flex; align-items: center; background: #2f2f2f; color: #a8a8a8; position: relative; }
.hint { display: flex; align-items: center; gap: 10px; }
.h1 { width: 69px; }
.h2 { width: 242px; }
.h3 { width: 311px; }
.stats { margin-left: auto; white-space: nowrap; }
.mark { position: absolute; right: 17px; bottom: 6px; font: 19px/26px "Liberation Sans", "Noto Sans CJK SC", sans-serif; color: #d8d8d8; opacity: .85; }
</style>
